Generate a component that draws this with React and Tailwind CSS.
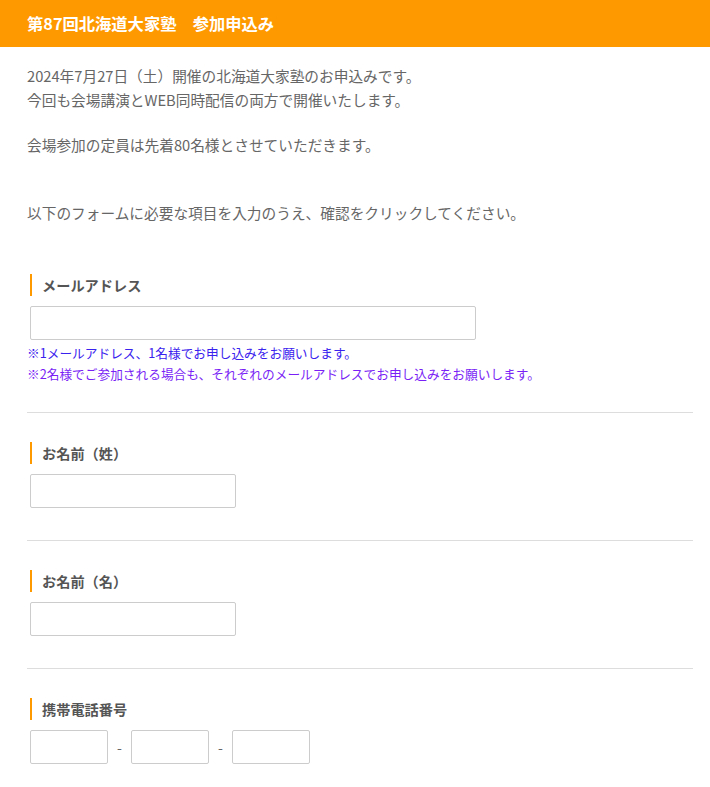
import React from "react";

function Label({ children }) {
  return (
    <div className="flex items-center h-[22px] ml-[3px] border-l-2 border-[#ff9900] pl-[10px] text-[14.2px] font-bold text-[#555555] leading-[22px]">
      {children}
    </div>
  );
}

function Input({ className }) {
  return (
    <div className={"h-[34px] border border-[#cccccc] rounded-[2px] bg-white " + className} />
  );
}

export default function App() {
  return (
    <div className="w-[710px] min-h-[787px] bg-white" style={{ fontFamily: '"Noto Sans CJK JP", "Noto Sans", sans-serif' }}>
      <div className="h-[47px] bg-[#ff9900] flex items-center px-[27px]">
        <h1 className="text-white font-bold text-[16.3px] leading-none">第87回北海道大家塾　参加申込み</h1>
      </div>
      <div className="px-[27px] pt-[17px] pr-[17px] text-[14.7px] text-[#666666]">
        <p className="leading-[24px]">
          2024年7月27日（土）開催の北海道大家塾のお申込みです。
          <br />
          今回も会場講演とWEB同時配信の両方で開催いたします。
        </p>
        <p className="leading-[24px] mt-[21px]">会場参加の定員は先着80名様とさせていただきます。</p>
        <p className="leading-[24px] mt-[44px]">以下のフォームに必要な項目を入力のうえ、確認をクリックしてください。</p>

        <div className="mt-[49px] pb-[28px] border-b border-[#dddddd]">
          <Label>メールアドレス</Label>
          <Input className="mt-[10px] ml-[3px] w-[446px]" />
          <p className="mt-[2px] text-[12.7px] leading-[21px] text-[#3a22ee]">※1メールアドレス、1名様でお申し込みをお願いします。</p>
          <p className="text-[12.7px] leading-[21px] text-[#7a1ff5]">※2名様でご参加される場合も、それぞれのメールアドレスでお申し込みをお願いします。</p>
        </div>

        <div className="pt-[29px] pb-[32px] border-b border-[#dddddd]">
          <Label>お名前（姓）</Label>
          <Input className="mt-[10px] ml-[3px] w-[206px]" />
        </div>

        <div className="pt-[29px] pb-[32px] border-b border-[#dddddd]">
          <Label>お名前（名）</Label>
          <Input className="mt-[10px] ml-[3px] w-[206px]" />
        </div>

        <div className="pt-[29px] pb-[32px]">
          <Label>携帯電話番号</Label>
          <div className="mt-[10px] ml-[3px] flex items-center">
            <Input className="w-[78px]" />
            <span className="w-[23px] text-center text-[14px] text-[#666666]">-</span>
            <Input className="w-[78px]" />
            <span className="w-[23px] text-center text-[14px] text-[#666666]">-</span>
            <Input className="w-[78px]" />
          </div>
        </div>
      </div>
    </div>
  );
}
